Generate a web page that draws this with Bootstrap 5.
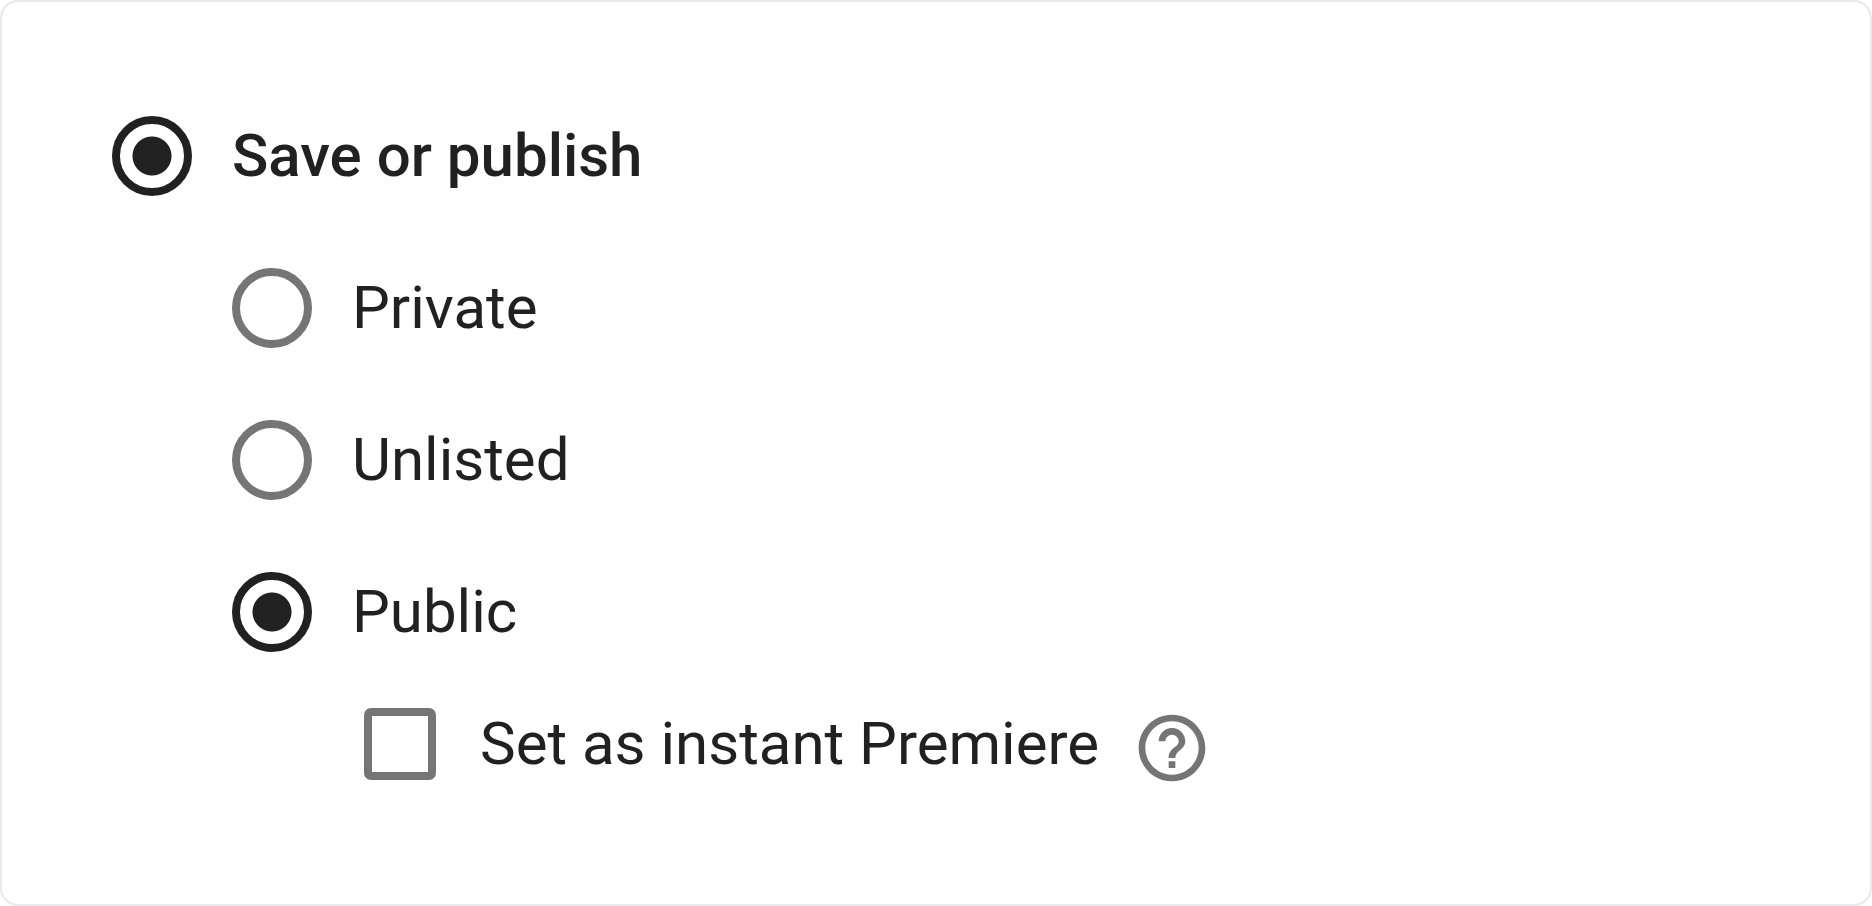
<!DOCTYPE html>
<html lang="en">
<head>
<meta charset="utf-8">
<meta name="viewport" content="width=device-width, initial-scale=1">
<title>Visibility</title>
<link href="https://cdn.jsdelivr.net/npm/bootstrap@5.3.0/dist/css/bootstrap.min.css" rel="stylesheet">
<style>
  body { font-family: Roboto, "Liberation Sans", sans-serif; font-size: 60px; line-height: 80px; color: #212121; }
  .visibility-card { border: 2px solid #e8e8f0; border-radius: 18px; padding: 114px 110px; }
  .option-list { gap: 72px; }
  .option-group { padding-left: 120px; }
  .option-row { gap: 40px; }
  .option-row .form-check-input { width: 80px; height: 80px; margin: 0; border: 8px solid #757575; flex-shrink: 0; background-color: #fff; }
  .option-row .form-check-input:checked { border-color: #212121; background: radial-gradient(circle, #212121 19px, #fff 20px) border-box; }
  .option-row .form-check-input[type="checkbox"] { width: 72px; height: 72px; border-radius: 7px; }
  .option-row .form-check-input:focus { box-shadow: 0 0 0 8px #e0e0e0; }
  .title-label { font-weight: 500; }
  .premiere-row { margin-top: -20px; padding-left: 132px; gap: 44px; }
  .help-button { color: #757575; margin: 4px 0 -4px -11px; }
  .help-button svg { width: 80px; height: 80px; }
</style>
</head>
<body class="min-vh-100 d-flex">
<form class="visibility-card bg-white flex-grow-1">
  <fieldset class="option-list d-flex flex-column">
    <div class="option-row d-flex align-items-center">
      <input class="form-check-input" type="radio" name="mode" id="save" checked>
      <label class="title-label" for="save">Save or publish</label>
    </div>
    <div class="option-group option-list d-flex flex-column">
      <div class="option-row d-flex align-items-center">
        <input class="form-check-input" type="radio" name="visibility" id="private">
        <label for="private">Private</label>
      </div>
      <div class="option-row d-flex align-items-center">
        <input class="form-check-input" type="radio" name="visibility" id="unlisted">
        <label for="unlisted">Unlisted</label>
      </div>
      <div class="option-row d-flex align-items-center">
        <input class="form-check-input" type="radio" name="visibility" id="public" checked>
        <label for="public">Public</label>
      </div>
      <div class="option-row premiere-row d-flex align-items-center">
        <input class="form-check-input" type="checkbox" id="premiere">
        <label for="premiere">Set as instant Premiere</label>
        <button class="help-button btn p-0 border-0 d-flex" type="button" aria-label="Help">
          <svg viewBox="0 0 24 24" fill="currentColor" aria-hidden="true"><path d="M11 18h2v-2h-2v2zm1-16C6.480 2 2 6.480 2 12s4.480 10 10 10 10-4.480 10-10S17.520 2 12 2zm0 18c-4.410 0-8-3.590-8-8s3.590-8 8-8 8 3.590 8 8-3.590 8-8 8zm0-14c-2.210 0-4 1.790-4 4h2c0-1.100.9-2 2-2s2 .9 2 2c0 2-3 1.750-3 5h2c0-2.250 3-2.500 3-5 0-2.210-1.790-4-4-4z"/></svg>
        </button>
      </div>
    </div>
  </fieldset>
</form>
<script src="https://cdn.jsdelivr.net/npm/bootstrap@5.3.0/dist/js/bootstrap.bundle.min.js"></script>
</body>
</html>
